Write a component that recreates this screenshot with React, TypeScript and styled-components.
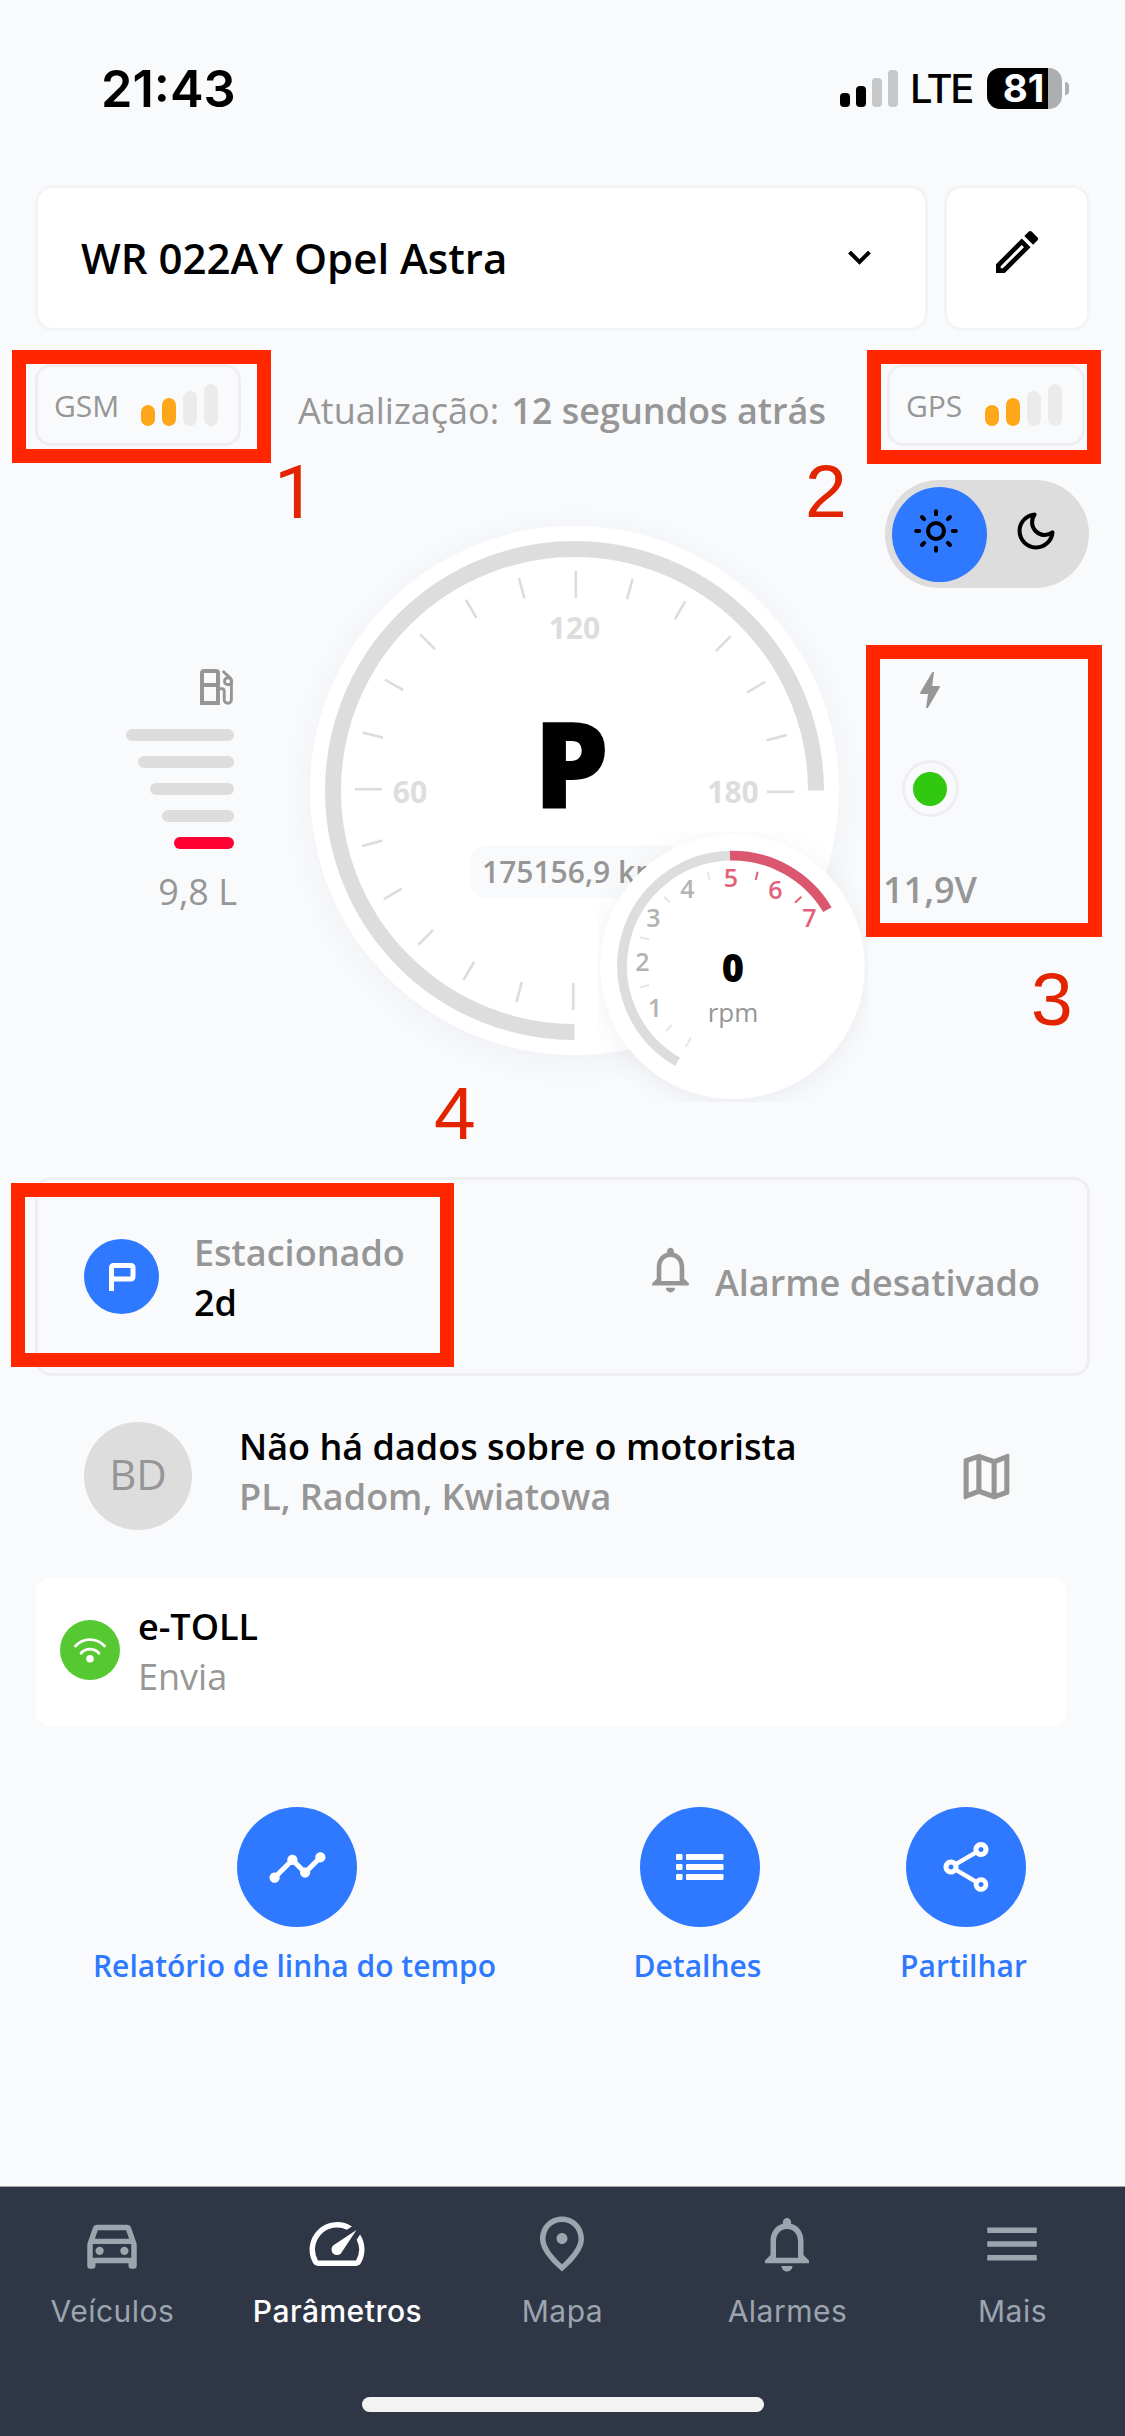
import React from "react";
import styled, { createGlobalStyle } from "styled-components";
import {
  MdOutlineEdit,
  MdOutlineNotifications,
  MdOutlineMap,
  MdOutlineDirectionsCar,
  MdSpeed,
  MdMenu,
  MdTimeline,
  MdOutlineShare,
} from "react-icons/md";

const c = {
  bg: "#f9fafc",
  line: "#efeff1",
  track: "#ddddde",
  faint: "#ebebec",
  gray: "#969696",
  blue: "#2e79ff",
  orange: "#ffa71a",
  nav: "#2f3747",
  navText: "#9ca4ae",
  mark: "#ff2600",
  markText: "#e22400",
};

const sans = `"Open Sans", "Noto Sans", sans-serif`;
const system = `Inter, "Liberation Sans", sans-serif`;

const Global = createGlobalStyle`
  *, *::before, *::after { box-sizing: border-box; }
  body { margin: 0; background: ${c.bg}; }
  svg { display: block; flex: none; }
`;

const Screen = styled.div`
  position: relative;
  width: 1125px;
  height: 2436px;
  display: flex;
  flex-direction: column;
  overflow: hidden;
  background: ${c.bg};
  color: #000;
  font-family: ${sans};
`;

type TextProps = {
  $size?: number;
  $weight?: number;
  $color?: string;
  $lh?: number;
  $track?: number;
};
const Text = styled.span<TextProps>`
  white-space: pre;
  font-size: ${(p) => p.$size ?? 36}px;
  font-weight: ${(p) => p.$weight ?? 400};
  color: ${(p) => p.$color ?? "#000"};
  line-height: ${(p) => p.$lh ?? 50}px;
  letter-spacing: ${(p) => p.$track ?? 0}px;
`;

/* ---------- status bar ---------- */
const StatusBar = styled.header`
  display: flex;
  align-items: center;
  justify-content: space-between;
  height: 177px;
  padding: 0 56px 0 101px;
  margin-bottom: 8px;
  font-family: ${system};
`;
const Clock = styled.time`
  font-size: 50.5px;
  font-weight: 600;
  line-height: 60px;
`;
const StatusRight = styled.div`
  display: flex;
  align-items: center;
`;
const CellBars = styled.div`
  display: flex;
  align-items: flex-end;
  gap: 6px;
  height: 37px;
  margin-right: 12px;
`;
const CellBar = styled.i<{ $h: number; $on: boolean }>`
  width: 10px;
  height: ${(p) => p.$h}px;
  border-radius: 4px;
  background: ${(p) => (p.$on ? "#000" : "#c7c8ca")};
`;
const Network = styled.span`
  width: 62px;
  margin-right: 15px;
  font-size: 40px;
  font-weight: 500;
  line-height: 50px;
  letter-spacing: -2.4px;
  white-space: nowrap;
`;
const Battery = styled.div`
  display: flex;
  align-items: center;
  justify-content: center;
  width: 75px;
  height: 41px;
  padding-right: 2px;
  border-radius: 13px;
  background: linear-gradient(90deg, #000 61px, #adaeb0 61px);
  color: #fff;
  font-size: 38.5px;
  font-weight: 700;
  line-height: 41px;
`;
const BatteryCap = styled.i`
  width: 4px;
  height: 13px;
  margin-left: 3px;
  border-radius: 0 4px 4px 0;
  background: #adaeb0;
`;

/* ---------- header ---------- */
const Header = styled.div`
  display: flex;
  gap: 16px;
  height: 146px;
  margin: 0 35px 0 35px;
`;
const Card = styled.div`
  border: 3px solid #f3f4f5;
  border-radius: 18px;
  background: #fff;
`;
const Select = styled(Card)`
  flex: 1;
  display: flex;
  align-items: center;
  justify-content: space-between;
  padding: 0 54px 0 43px;
`;
const EditButton = styled(Card)`
  display: flex;
  justify-content: center;
  width: 146px;
  padding-top: 36px;
`;

/* ---------- signals ---------- */
const SignalRow = styled.div`
  display: flex;
  justify-content: space-between;
  align-items: center;
  height: 82px;
  margin: 33px 40px 0 35px;
`;
const Pill = styled.div<{ $w: number }>`
  display: flex;
  align-items: center;
  justify-content: space-between;
  width: ${(p) => p.$w}px;
  height: 82px;
  padding: 0 20px 0 16px;
  border: 3px solid ${c.line};
  border-radius: 16px;
`;
const PillLabel = styled(Text)`
  padding-top: 2px;
`;
const SignalBars = styled.div`
  display: flex;
  align-items: flex-end;
  gap: 6.5px;
  height: 42px;
`;
const SignalBar = styled.i<{ $h: number; $on: boolean }>`
  width: 14.5px;
  height: ${(p) => p.$h}px;
  border-radius: 7px;
  background: ${(p) => (p.$on ? c.orange : c.faint)};
`;
const Update = styled.div`
  display: flex;
  gap: 12px;
  padding: 11px 4px 0 0;
`;

function Signal({ label, width }: { label: string; width: number }) {
  return (
    <Pill $w={width}>
      <PillLabel $size={30} $color={c.gray}>{label}</PillLabel>
      <SignalBars>
        {[21, 28, 35, 42].map((h, i) => (
          <SignalBar key={h} $h={h} $on={i < 2} />
        ))}
      </SignalBars>
    </Pill>
  );
}

/* ---------- dashboard ---------- */
const Dashboard = styled.section`
  display: grid;
  grid-template-columns: 275px 575px 1fr;
  height: 731px;
  margin: 0 35px;
`;
const FuelColumn = styled.div`
  display: flex;
  flex-direction: column;
  align-items: flex-end;
  padding: 223px 76px 0 0;
`;
const FuelBars = styled.div`
  display: flex;
  flex-direction: column;
  align-items: flex-end;
  gap: 15px;
  margin: 24px 0 18px;
`;
const FuelBar = styled.i<{ $w: number; $low: boolean }>`
  width: ${(p) => p.$w}px;
  height: 12px;
  border-radius: 6px;
  background: ${(p) => (p.$low ? "#ff0032" : c.track)};
`;
const FuelLevel = styled(Text)`
  margin-right: -3px;
`;
const GaugeColumn = styled.div`
  position: relative;
  padding-top: 80px;
`;
const Speedometer = styled.div`
  width: 529px;
  height: 529px;
  border-radius: 50%;
  background: #fff;
  box-shadow: 0 6px 36px rgba(40, 50, 70, 0.05);
`;
const Tachometer = styled.div`
  position: absolute;
  left: 288px;
  top: 386px;
  width: 270px;
  height: 270px;
`;
const RightColumn = styled.div`
  padding-top: 34px;
`;
const Toggle = styled.div`
  display: flex;
  align-items: center;
  width: 204px;
  height: 108px;
  padding: 0 7px;
  border-radius: 54px;
  background: ${c.track};
`;
const Knob = styled.div<{ $on?: boolean }>`
  display: flex;
  align-items: center;
  justify-content: center;
  width: 95px;
  height: 95px;
  padding: ${(p) => (p.$on ? "0 7px 6px 0" : "0 0 6px 2px")};
  border-radius: 50%;
  background: ${(p) => (p.$on ? c.blue : "transparent")};
`;
const Voltage = styled.div`
  display: flex;
  flex-direction: column;
  align-items: center;
  width: 90px;
  margin-top: 84px;
`;
const Led = styled.div`
  display: flex;
  align-items: center;
  justify-content: center;
  width: 57px;
  height: 57px;
  margin: 52px 0 48px;
  border: 3px solid ${c.line};
  border-radius: 50%;
  &::after {
    content: "";
    width: 34px;
    height: 34px;
    border-radius: 50%;
    background: #31c810;
  }
`;

const polar = (cx: number, cy: number, r: number, deg: number) => {
  const a = ((deg - 90) * Math.PI) / 180;
  return `${(cx + r * Math.cos(a)).toFixed(2)} ${(cy + r * Math.sin(a)).toFixed(2)}`;
};
const arc = (cx: number, cy: number, r: number, from: number, to: number) =>
  `M${polar(cx, cy, r, from)} A${r} ${r} 0 ${to - from > 180 ? 1 : 0} 1 ${polar(cx, cy, r, to)}`;

function SpeedFace() {
  const ticks = Array.from({ length: 19 }, (_, i) => -180 + i * 15);
  return (
    <svg width="529" height="529" viewBox="0 0 529 529">
      <path d={arc(264.5, 264.5, 241.5, 180, 450)} fill="none" stroke={c.track} strokeWidth="16" />
      {ticks.map((t) => (
        <rect
          key={t}
          x="264.5"
          y="45"
          width="2.6"
          height={t % 90 === 0 ? 27 : 21}
          fill={c.track}
          transform={`rotate(${t} 264.5 264.5)`}
        />
      ))}
      <g fill={c.track} fontFamily={sans} fontSize="30" fontWeight="700" textAnchor="middle">
        <text x="264.5" y="112.5">120</text>
        <text x="100" y="277">60</text>
        <text x="423" y="277">180</text>
      </g>
      <text x="261.5" y="283" fontFamily={sans} fontSize="120" fontWeight="800" textAnchor="middle">P</text>
      <rect x="161" y="319" width="207" height="53" rx="15" fill={c.bg} />
      <text x="172" y="356.5" fontFamily={sans} fontSize="30" fontWeight="600" fill={c.gray}>175156,9 km</text>
    </svg>
  );
}

function TachFace() {
  const labels: [string, number, number][] = [
    ["1", 57, 417.7], ["2", 44.3, 372], ["3", 55.3, 328], ["4", 89.3, 299],
    ["5", 133, 288.3], ["6", 177.3, 300], ["7", 211.3, 328],
  ];
  const ticks: [number, number, number, number][] = [
    [93, 205.7, 87.7, 214.7], [73.7, 193, 68, 199], [51, 153, 42.3, 155.3],
    [51, 107.3, 42.3, 105.3], [72, 70.3, 66, 65], [111.7, 47.7, 109.7, 39.7],
    [157.7, 48, 159.7, 39.7], [197, 70.7, 203.3, 64.7],
  ];
  return (
    <svg width="270" height="270" viewBox="0 0 270 270">
      <defs>
        <filter id="soft" x="-20%" y="-20%" width="140%" height="140%">
          <feDropShadow dx="0" dy="4" stdDeviation="13" floodColor="#283246" floodOpacity="0.06" />
        </filter>
      </defs>
      <circle cx="134.5" cy="134.7" r="132" fill="#fff" filter="url(#soft)" />
      <path d={arc(134.5, 134, 110.4, 209.8, 359)} fill="none" stroke={c.track} strokeWidth="9.7" />
      <path d={arc(134.5, 134, 110.4, 358.7, 419.3)} fill="none" stroke="#da576f" strokeWidth="9.7" />
      {ticks.map(([x1, y1, x2, y2], i) => (
        <line key={i} x1={x1} y1={y1} x2={x2} y2={y2} stroke={i > 5 ? "#e2607a" : "#e6e6e7"} strokeWidth="2" />
      ))}
      <g fontFamily={sans} fontSize="25" fontWeight="600" textAnchor="middle">
        {labels.map(([s, x, y], i) => (
          <text key={s} x={x} y={y - 233} fill={i > 3 ? "#e2607a" : "#b3b3b3"}>{s}</text>
        ))}
      </g>
      <text x="135" y="149.5" fontFamily={sans} fontSize="38" fontWeight="800" textAnchor="middle">0</text>
      <text x="135" y="189.7" fontFamily={sans} fontSize="26" fill={c.gray} textAnchor="middle">rpm</text>
    </svg>
  );
}

/* ---------- vehicle status ---------- */
const StatusCard = styled.section`
  display: flex;
  justify-content: space-between;
  height: 199px;
  margin: 0 35px;
  padding: 0 47px 0 46px;
  border: 3px solid ${c.line};
  border-radius: 16px;
`;
const Parked = styled.div`
  display: flex;
  align-items: center;
  gap: 35px;
`;
const Round = styled.div<{ $d: number; $bg: string }>`
  display: flex;
  align-items: center;
  justify-content: center;
  flex: none;
  width: ${(p) => p.$d}px;
  height: ${(p) => p.$d}px;
  border-radius: 50%;
  background: ${(p) => p.$bg};
`;
const Stack = styled.div<{ $lift?: number }>`
  display: flex;
  flex-direction: column;
  padding-bottom: ${(p) => p.$lift ?? 0}px;
`;
const ParkedText = styled(Stack)`
  padding-top: 2px;
`;
const Alarm = styled.div`
  display: flex;
  align-items: flex-start;
  gap: 17px;
  padding-top: 62px;
`;
const AlarmLabel = styled.div`
  padding-top: 16px;
`;
const Driver = styled.section`
  display: flex;
  align-items: center;
  height: 202px;
  padding: 0 108px 2px 84px;
`;
const Initials = styled(Text)`
  padding-bottom: 4px;
`;
const DriverText = styled(Stack)`
  flex: 1;
  margin-left: 47px;
`;
const Toll = styled.section`
  display: flex;
  align-items: center;
  gap: 18px;
  height: 148px;
  margin: 0 59px 0 36px;
  padding: 0 24px 4px;
  border-radius: 14px;
  background: #fff;
`;
const TollText = styled(Stack)`
  padding-top: 4px;
`;

/* ---------- actions ---------- */
const Actions = styled.section`
  display: grid;
  grid-template-columns: 408px 200px 200px;
  column-gap: 82.5px;
  margin: 81px 0 0 93px;
`;
const Action = styled.button<{ $shift?: number }>`
  display: flex;
  flex-direction: column;
  align-items: center;
  gap: 14px;
  padding: 0;
  margin-left: ${(p) => p.$shift ?? 0}px;
  border: 0;
  background: none;
  font-family: inherit;
`;
const ActionLabel = styled(Text)`
  margin-right: 5px;
`;

/* ---------- bottom navigation ---------- */
const Nav = styled.nav`
  display: grid;
  grid-template-columns: repeat(5, 1fr);
  height: 250px;
  margin-top: auto;
  padding-top: 24px;
  border-top: 1px solid #a3a6ad;
  background: ${c.nav};
  font-family: ${system};
`;
const NavItem = styled.a<{ $active?: boolean }>`
  display: flex;
  flex-direction: column;
  align-items: center;
  gap: 14px;
  height: 120px;
  color: ${(p) => (p.$active ? "#fff" : c.navText)};
  font-size: 30px;
  font-weight: ${(p) => (p.$active ? 500 : 400)};
  line-height: 40px;
  letter-spacing: 0.5px;
  svg { margin-right: 2px; }
`;
const HomeIndicator = styled.div`
  position: absolute;
  left: 362px;
  bottom: 24px;
  width: 402px;
  height: 15px;
  border-radius: 8px;
  background: #f3f3f3;
`;

/* ---------- annotations laid over the screen ---------- */
const Frame = styled.div<{ $x: number; $y: number; $w: number; $h: number }>`
  position: absolute;
  left: ${(p) => p.$x}px;
  top: ${(p) => p.$y}px;
  width: ${(p) => p.$w}px;
  height: ${(p) => p.$h}px;
  border: 14px solid ${c.mark};
`;
const Mark = styled.span<{ $x: number; $y: number; $font?: string }>`
  position: absolute;
  left: ${(p) => p.$x}px;
  top: ${(p) => p.$y}px;
  color: ${c.markText};
  font-family: ${(p) => p.$font ?? `"Liberation Sans"`}, Arial, sans-serif;
  font-size: 75px;
  line-height: 75px;
`;

const FuelIcon = () => (
  <svg width="34" height="36" viewBox="0 0 34 36" fill="none" stroke={c.gray} strokeLinejoin="round">
    <path d="M2 34V4a2 2 0 0 1 2-2h12a2 2 0 0 1 2 2v30z" strokeWidth="4" strokeLinejoin="miter" />
    <path d="M2 16h16" strokeWidth="4" />
    <path d="M19.800 19.700H22a2.200 2.200 0 0 1 2.200 2.200v8.800a3.600 3.600 0 0 0 7.200 0V11.500a3 3 0 0 0-.9-2.100L23.800 3" strokeWidth="2.900" strokeLinecap="square" />
    <circle cx="28" cy="12.300" r="3.500" strokeWidth="2.900" />
  </svg>
);
const BoltIcon = () => (
  <svg width="20" height="36" viewBox="0 0 20 36" fill={c.gray}>
    <path d="M12.600 0h1.400L12.200 14h7c.8 0 1 .6.700 1.200L8.200 35.400c-.2.400-.5.600-.9.600H6l2-14H1C.2 22-.2 21.300.2 20.600L12 .5z" />
  </svg>
);
const SunIcon = () => (
  <svg width="44" height="44" viewBox="0 0 44 44" fill="none" stroke="#000" strokeWidth="4" strokeLinecap="round">
    <circle cx="22" cy="22" r="8" />
    {[0, 45, 90, 135, 180, 225, 270, 315].map((a) => (
      <path key={a} d="M22 2.200v3" transform={`rotate(${a} 22 22)`} />
    ))}
  </svg>
);
const MoonIcon = () => (
  <svg width="44" height="44" viewBox="0 0 24 24" fill="none" stroke="#000" strokeWidth="2.200" strokeLinejoin="round">
    <path d="M21 12.790A9 9 0 1 1 11.210 3 7 7 0 0 0 21 12.790z" />
  </svg>
);
const ParkIcon = () => (
  <svg width="29" height="28" viewBox="-2 0 29 28" fill="none" stroke="#fff" strokeWidth="5">
    <path d="M2.500 28V4.500a2 2 0 0 1 2-2h17.500a2 2 0 0 1 2 2V14a2 2 0 0 1-2 2H2.500" />
  </svg>
);
const WifiIcon = () => (
  <svg width="34" height="28" viewBox="0 0 34 28" fill="none" stroke="#fff" strokeWidth="2.800" strokeLinecap="round">
    <path d="M2.500 10a19.500 19.500 0 0 1 29 0" />
    <path d="M8 17.200a12 12 0 0 1 18 0" />
    <circle cx="17" cy="22.800" r="3.800" fill="#fff" stroke="none" />
  </svg>
);
const ListIcon = () => (
  <svg width="48" height="26" viewBox="0 0 48 26" fill="#fff">
    {[0, 10, 20].map((y) => (
      <g key={y}>
        <rect x="0" y={y} width="6.500" height="6" rx="1.200" />
        <rect x="10" y={y} width="37.500" height="6" rx="1.200" />
      </g>
    ))}
  </svg>
);
const PinIcon = () => (
  <svg width="66" height="66" viewBox="0 0 24 24" fill="currentColor">
    <path d="M12 12c-1.100 0-2-.9-2-2s.9-2 2-2 2 .9 2 2-.9 2-2 2zm6-1.800C18 6.570 15.350 4 12 4s-6 2.570-6 6.200c0 2.340 1.950 5.440 6 9.140 4.050-3.700 6-6.800 6-9.140zM12 2c4.200 0 8 3.220 8 8.200 0 3.320-2.670 7.250-8 11.800-5.330-4.550-8-8.480-8-11.800C4 5.220 7.800 2 12 2z" />
  </svg>
);

export default function App() {
  return (
    <Screen>
      <Global />
      <StatusBar>
        <Clock>21:43</Clock>
        <StatusRight>
          <CellBars>
            {[14, 21, 29, 37].map((h, i) => (
              <CellBar key={h} $h={h} $on={i < 2} />
            ))}
          </CellBars>
          <Network>LTE</Network>
          <Battery>81</Battery>
          <BatteryCap />
        </StatusRight>
      </StatusBar>

      <Header>
        <Select>
          <Text $size={42} $weight={600}>WR 022AY Opel Astra</Text>
          <svg width="23" height="15" viewBox="0 0 23 15" fill="none" stroke="#000" strokeWidth="4">
            <path d="M1.500 1l10 10 10-10" />
          </svg>
        </Select>
        <EditButton>
          <MdOutlineEdit size={56} />
        </EditButton>
      </Header>

      <SignalRow>
        <Signal label="GSM" width={206} />
        <Update>
          <Text $color={c.gray}>Atualização:</Text>
          <Text $color={c.gray} $weight={600}>12 segundos atrás</Text>
        </Update>
        <Signal label="GPS" width={198} />
      </SignalRow>

      <Dashboard>
        <FuelColumn>
          <FuelIcon />
          <FuelBars>
            {[108, 96, 84, 72, 60].map((w, i) => (
              <FuelBar key={w} $w={w} $low={i === 4} />
            ))}
          </FuelBars>
          <FuelLevel $color={c.gray}>9,8 L</FuelLevel>
        </FuelColumn>
        <GaugeColumn>
          <Speedometer>
            <SpeedFace />
          </Speedometer>
          <Tachometer>
            <TachFace />
          </Tachometer>
        </GaugeColumn>
        <RightColumn>
          <Toggle>
            <Knob $on>
              <SunIcon />
            </Knob>
            <Knob>
              <MoonIcon />
            </Knob>
          </Toggle>
          <Voltage>
            <BoltIcon />
            <Led />
            <Text $weight={600} $color={c.gray}>11,9V</Text>
          </Voltage>
        </RightColumn>
      </Dashboard>

      <StatusCard>
        <Parked>
          <Round $d={75} $bg={c.blue}>
            <ParkIcon />
          </Round>
          <ParkedText>
            <Text $weight={600} $color={c.gray}>Estacionado</Text>
            <Text $weight={600}>2d</Text>
          </ParkedText>
        </Parked>
        <Alarm>
          <MdOutlineNotifications size={55} color={c.gray} />
          <AlarmLabel>
            <Text $weight={600} $color={c.gray}>Alarme desativado</Text>
          </AlarmLabel>
        </Alarm>
      </StatusCard>

      <Driver>
        <Round $d={108} $bg={c.track}>
          <Initials $size={42} $color={c.gray}>BD</Initials>
        </Round>
        <DriverText $lift={8}>
          <Text $weight={600}>Não há dados sobre o motorista</Text>
          <Text $weight={600} $color={c.gray}>PL, Radom, Kwiatowa</Text>
        </DriverText>
        <MdOutlineMap size={61} color={c.gray} />
      </Driver>

      <Toll>
        <Round $d={60} $bg="#56c832">
          <WifiIcon />
        </Round>
        <TollText>
          <Text $weight={600}>e-TOLL</Text>
          <Text $color={c.gray}>Envia</Text>
        </TollText>
      </Toll>

      <Actions>
        <Action>
          <Round $d={120} $bg={c.blue}>
            <MdTimeline size={61} color="#fff" />
          </Round>
          <ActionLabel $size={30} $weight={600} $color={c.blue}>Relatório de linha do tempo</ActionLabel>
        </Action>
        <Action $shift={33}>
          <Round $d={120} $bg={c.blue}>
            <ListIcon />
          </Round>
          <ActionLabel $size={30} $weight={600} $color={c.blue}>Detalhes</ActionLabel>
        </Action>
        <Action>
          <Round $d={120} $bg={c.blue}>
            <MdOutlineShare size={60} color="#fff" />
          </Round>
          <ActionLabel $size={30} $weight={600} $color={c.blue}>Partilhar</ActionLabel>
        </Action>
      </Actions>

      <Nav>
        <NavItem><MdOutlineDirectionsCar size={66} />Veículos</NavItem>
        <NavItem $active><MdSpeed size={66} />Parâmetros</NavItem>
        <NavItem><PinIcon />Mapa</NavItem>
        <NavItem><MdOutlineNotifications size={66} />Alarmes</NavItem>
        <NavItem><MdMenu size={66} />Mais</NavItem>
      </Nav>
      <HomeIndicator />

      <Frame $x={12} $y={350} $w={259} $h={113} />
      <Frame $x={867} $y={350} $w={234} $h={114} />
      <Frame $x={866} $y={645} $w={236} $h={292} />
      <Frame $x={11} $y={1183} $w={443} $h={184} />
      <Mark $x={274} $y={455} $font="Roboto">1</Mark>
      <Mark $x={805} $y={454}>2</Mark>
      <Mark $x={1031} $y={962}>3</Mark>
      <Mark $x={434} $y={1076}>4</Mark>
    </Screen>
  );
}
